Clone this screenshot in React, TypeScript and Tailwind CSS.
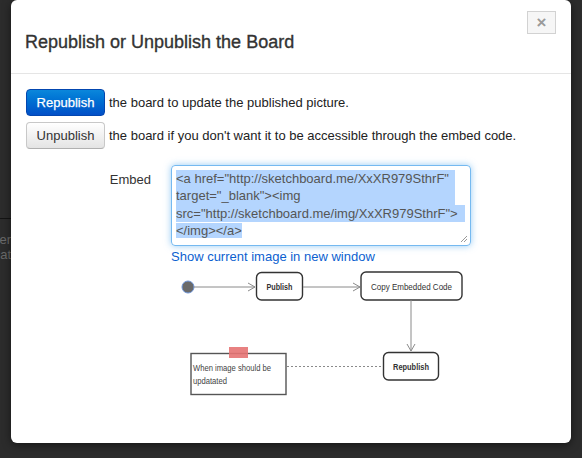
import React from 'react';

// Republish / Unpublish dialog over the dark board background
function FlowDiagram() {
  const line = '#8a8a8a';
  return (
    <svg width="300" height="140" viewBox="0 0 300 140" className="-mt-px ml-[145px] block">
      {/* start node */}
      <circle cx="17" cy="22" r="6" fill="#6a6a6a" stroke="#6e95d8" strokeWidth="1" />
      <line x1="23" y1="22" x2="84" y2="22" stroke={line} strokeWidth="1" />
      <polyline points="77,18 84,22 77,26" fill="none" stroke={line} strokeWidth="1" />

      <rect x="85.5" y="7.5" width="46" height="27.5" rx="5" fill="#fff" stroke="#333" strokeWidth="1.4" />
      <text x="108.5" y="25" fontSize="9" fontWeight="bold" fill="#333" textAnchor="middle" textLength="26" lengthAdjust="spacingAndGlyphs">Publish</text>

      <line x1="132" y1="22" x2="189" y2="22" stroke={line} strokeWidth="1" />
      <polyline points="182,18 189,22 182,26" fill="none" stroke={line} strokeWidth="1" />

      <rect x="190" y="7" width="101" height="28" rx="5" fill="#fff" stroke="#333" strokeWidth="1.4" />
      <text x="240.5" y="25" fontSize="9" fill="#333" textAnchor="middle" textLength="81" lengthAdjust="spacingAndGlyphs">Copy Embedded Code</text>

      <line x1="240" y1="35" x2="240" y2="86" stroke={line} strokeWidth="1" />
      <polyline points="236,79 240,86 244,79" fill="none" stroke={line} strokeWidth="1" />

      <rect x="212.5" y="87.5" width="55" height="27.5" rx="5" fill="#fff" stroke="#333" strokeWidth="1.4" />
      <text x="240" y="104.5" fontSize="9" fontWeight="bold" fill="#333" textAnchor="middle" textLength="36" lengthAdjust="spacingAndGlyphs">Republish</text>

      {/* note */}
      <line x1="116" y1="101.5" x2="212" y2="101.5" stroke={line} strokeWidth="1" strokeDasharray="2 2" />
      <rect x="20" y="88.5" width="95" height="41" fill="#fff" stroke="#555" strokeWidth="1.4" />
      <rect x="58" y="82" width="19" height="11" fill="#e57373" opacity="0.9" />
      <text x="22" y="106" fontSize="9" fill="#444" textLength="78" lengthAdjust="spacingAndGlyphs">When image should be</text>
      <text x="22" y="118.5" fontSize="9" fill="#444" textLength="34" lengthAdjust="spacingAndGlyphs">updatated</text>
    </svg>
  );
}

export default function App() {
  return (
    <div className="w-[582px] h-[458px] bg-[#2c2c2c] flex overflow-hidden font-['Liberation_Sans',Arial,sans-serif]">
      {/* board behind the dialog */}
      <div className="w-[11px] shrink-0 overflow-hidden pt-[218px]">
        <div className="border-t border-[#141414]"></div>
        <div className="flex flex-col items-end mt-[13px] text-[13px] leading-[15px] text-[#6a6a6a] whitespace-nowrap">
          <span>er</span>
          <span>at</span>
        </div>
      </div>

      <div className="w-[560px] h-[443px] bg-white rounded-[6px] shadow-[0_2px_8px_rgba(0,0,0,0.5)] shrink-0">
        <div className="h-[74px] border-b border-[#e5e5e5] flex items-start justify-between pl-[14px] pr-[15px] pt-[11px]">
          <h3 className="mt-[19px] text-[18px] leading-[24px] text-[#333] [-webkit-text-stroke:0.35px_#333]">
            Republish or Unpublish the Board
          </h3>
          <button className="w-[29px] h-[23px] border border-[#d2d2d2] bg-[#f6f6f6] flex items-center justify-center text-[#9a9a9a] text-[17px] font-bold leading-none">
            ×
          </button>
        </div>

        <div className="pl-[15px] pt-[15px] text-[13px] text-[#222]">
          <div className="flex items-center gap-[4px]">
            <button className="w-[79px] h-[27px] rounded-[4px] bg-gradient-to-b from-[#0b87db] to-[#034fc7] border border-[#0346b0] text-white text-[13px] [-webkit-text-stroke:0.25px_#fff]">
              Republish
            </button>
            <span>the board to update the published picture.</span>
          </div>
          <div className="flex items-center gap-[4px] mt-[6px]">
            <button className="w-[79px] h-[27px] rounded-[4px] bg-gradient-to-b from-white to-[#e4e4e4] border border-[#c8c8c8] border-b-[#b0b0b0] text-[#333] text-[13px]">
              Unpublish
            </button>
            <span>the board if you don't want it to be accessible through the embed code.</span>
          </div>

          <div className="flex gap-[20px] mt-[16px]">
            <label className="w-[125px] text-right pt-[6px] leading-[18px] text-[#333]">Embed</label>
            <div className="relative w-[300px] h-[81px] rounded-[4px] border border-[rgba(82,168,236,0.8)] shadow-[0_0_7px_rgba(82,168,236,0.6)] px-[4px] pt-[4px] text-[13px] leading-[17.25px] text-[#555]">
              <div className="w-[279px] bg-[#b4d5fe] whitespace-nowrap">&lt;a href="http://sketchboard.me/XxXR979SthrF"</div>
              <div className="w-[279px] bg-[#b4d5fe] whitespace-nowrap">target="_blank"&gt;&lt;img</div>
              <div className="w-[289px] bg-[#b4d5fe] whitespace-nowrap">src="http://sketchboard.me/img/XxXR979SthrF"&gt;</div>
              <div><span className="bg-[#b4d5fe]">&lt;/img&gt;&lt;/a&gt;</span></div>
              <svg width="8" height="8" viewBox="0 0 8 8" className="absolute right-[2px] bottom-[2px]">
                <line x1="1" y1="7" x2="7" y2="1" stroke="#999" strokeWidth="1" />
                <line x1="4" y1="7" x2="7" y2="4" stroke="#999" strokeWidth="1" />
              </svg>
            </div>
          </div>

          <a className="block ml-[145px] mt-[2px] leading-[18px] text-[#0b5fd0] w-fit">Show current image in new window</a>

          <FlowDiagram />
        </div>
      </div>
    </div>
  );
}
